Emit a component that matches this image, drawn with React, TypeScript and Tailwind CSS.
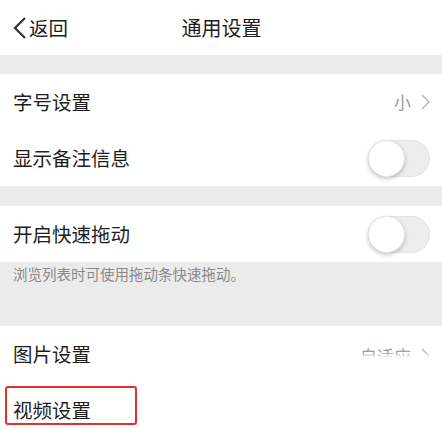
import React from "react";

const Toggle: React.FC = () => {
  return <div className="relative w-[62px] h-[37px] rounded-full bg-[#ededed] shadow-[inset_0_0_0_1px_#e4e4e4]">
    <div className="absolute left-0 top-0 w-[37px] h-[37px] rounded-full bg-white shadow-[0_2px_4px_rgba(0,0,0,0.22)] border border-[#e4e4e4]" />
  </div>
}

const Row: React.FC<{ title: string, right?: React.ReactNode, highlight?: boolean }> = ({ title, right, highlight }) => {
  return <div className="h-[56px] bg-white flex flex-row items-center justify-between pl-[13px] pr-[12px]">
    <div className="relative">
      {highlight && <div className="absolute -left-[8px] -top-[9px] w-[132px] h-[39px] border-2 border-[#e0302c] rounded-[3px]" />}
      <span className="text-[19.5px] text-[#1e1e1e]">{title}</span>
    </div>
    {right}
  </div>
}

const Chevron: React.FC = () => <svg width="9" height="16" viewBox="0 0 9 16" className="ml-[10px]">
  <path d="M1 1 L8 8 L1 15" fill="none" stroke="#b5b5b5" strokeWidth="1.4" />
</svg>

export default function App() {
  return <div className="relative w-[442px] h-[429px] overflow-hidden bg-[#ebebeb]" style={{ fontFamily: '"Noto Sans CJK SC", "Noto Sans", sans-serif' }}>
    <div className="h-[55px] bg-white flex flex-row items-center relative">
      <div className="flex flex-row items-center pl-[13px]">
        <svg width="14" height="22" viewBox="0 0 14 22">
          <path d="M12 1 L2 11 L12 21" fill="none" stroke="#333" strokeWidth="2.2" />
        </svg>
        <span className="text-[19.5px] text-[#1e1e1e] ml-[2px]">返回</span>
      </div>
      <div className="absolute left-0 right-0 text-center text-[20px] text-[#1e1e1e] pointer-events-none pl-[1px]">通用设置</div>
    </div>
    <div className="h-[19px]" />
    <Row title="字号设置" right={<div className="flex flex-row items-center text-[17px] text-[#999]">小<Chevron /></div>} />
    <Row title="显示备注信息" right={<Toggle />} />
    <div className="h-[20px]" />
    <Row title="开启快速拖动" right={<Toggle />} />
    <div className="h-[64px] pl-[13px] pt-[1px] text-[14.5px] text-[#8a8a8a] leading-[22px]">浏览列表时可使用拖动条快速拖动。</div>
    <Row title="图片设置" right={<div className="flex flex-row items-center text-[17px] text-[#999] translate-y-[2px]">自适应<Chevron /></div>} />
    <Row title="视频设置" highlight />
    <div className="absolute left-[282px] top-[355px] w-[200px] h-[100px] bg-white blur-[2px]" />
  </div>
}
